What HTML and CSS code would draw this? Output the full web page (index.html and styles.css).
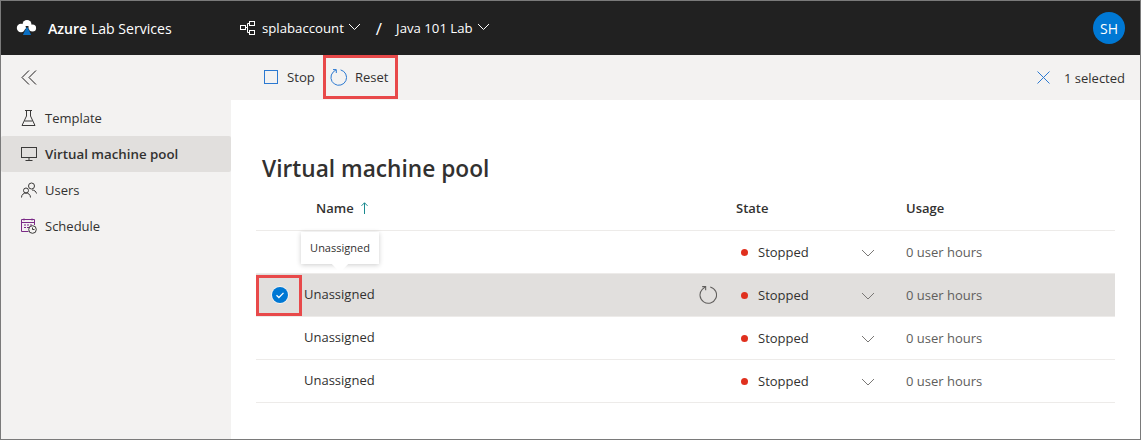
FILE: index.html
```html
<!doctype html>
<html>
    <head>
        <title>Azure Lab Services</title>
        <link rel="stylesheet" href="styles.css">
    </head>
    <body>
        <div class="frame">
            <header class="topbar">
                <svg class="logo" width="21" height="18" viewBox="0 0 21 18">
                    <circle cx="5" cy="9" r="4.2" fill="#fff" />
                    <circle cx="11" cy="5.5" r="4.5" fill="#fff" />
                    <circle cx="16.5" cy="9" r="3.6" fill="#fff" />
                    <path d="M9.5 7h3v3l-2 1z" fill="#212121" />
                    <path d="M10.5 8.5l-3.6 7.5h8.2l-3.4-7.5z" fill="#0a6fc2" />
                </svg>
                <div class="brand"><strong>Azure</strong> Lab Services</div>
                <svg class="net_icon" width="16" height="14" viewBox="0 0 16 14" fill="none" stroke="#fff">
                    <rect x="0.5" y="4.5" width="5" height="4" />
                    <rect x="9.5" y="0.5" width="5" height="4" />
                    <rect x="9.5" y="9.5" width="5" height="4" />
                    <path d="M5.5 6.5h2v-4h2M7.5 6.5v5h2" />
                </svg>
                <span class="crumb">splabaccount</span>
                <svg class="caret" width="13" height="8" viewBox="0 0 13 8" fill="none" stroke="#fff"><path d="M1 1l5.5 5.5L12 1" /></svg>
                <span class="slash">/</span>
                <span class="crumb">Java 101 Lab</span>
                <svg class="caret" width="13" height="8" viewBox="0 0 13 8" fill="none" stroke="#fff"><path d="M1 1l5.5 5.5L12 1" /></svg>
                <div class="avatar">SH</div>
            </header>
            <div class="toolbar">
                <div class="collapse">
                    <svg width="16" height="15" viewBox="0 0 16 15" fill="none" stroke="#201f1e"><path d="M8 .5L1 7.500l7 7M15 .5L8 7.500l7 7" /></svg>
                </div>
                <button class="tool tool_stop">
                    <svg width="14" height="14" viewBox="0 0 14 14" fill="none" stroke="#2b79d1"><rect x="0.5" y="0.5" width="13" height="13" /></svg>
                    Stop
                </button>
                <button class="tool tool_reset">
                    <svg width="17" height="17" viewBox="0 0 17 17" fill="none" stroke="#2b79d1"><path d="M10.600 .9A7.800 7.800 0 1 1 3.100 3.100L6 .8" /><path d="M3 .6H6.300V4" /></svg>
                    Reset
                </button>
                <div class="selected">
                    <svg width="13" height="13" viewBox="0 0 13 13" fill="none" stroke="#2b79d1"><path d="M.5 .5l12 12M12.500 .5l-12 12" /></svg>
                    <span class="selected_count">1 selected</span>
                </div>
            </div>
            <div class="body">
                <nav class="sidebar">
                    <a class="nav_item">
                        <svg width="15" height="16" viewBox="0 0 15 16" fill="none" stroke="#3b3a39"><path d="M4 .5h7M5.500 .5v5.500L1 15.500h13L9.500 6V.5M3.500 11h8" /></svg>
                        Template
                    </a>
                    <a class="nav_item nav_active">
                        <svg width="16" height="14" viewBox="0 0 16 14" fill="none" stroke="#3b3a39"><rect x="0.500" y="0.500" width="15" height="10" /><path d="M8 10.500v2.500M4.500 13.500h7" /></svg>
                        Virtual machine pool
                    </a>
                    <a class="nav_item">
                        <svg width="16" height="16" viewBox="0 0 16 16" fill="none" stroke="#3b3a39"><circle cx="10.500" cy="4" r="3" /><circle cx="5" cy="8.500" r="2.500" /><path d="M.5 15.500c0-6 9-6 9 0M11 8c2.500 0 4 1.500 4.500 3.500" /></svg>
                        Users
                    </a>
                    <a class="nav_item">
                        <svg width="16" height="16" viewBox="0 0 16 16" fill="none" stroke="#7a2a86"><path d="M7.500 13.500H.5V1.500h13v5.500M.5 4.500h13M3 .5v2M11 .5v2M3 7h2M6 7h2M9 7h2M3 9.500h2M6 9.500h2" /><circle cx="11.500" cy="11.500" r="3.800" stroke="#3b3a39" /><path d="M11.500 9.500v2h2" stroke="#3b3a39" /></svg>
                        Schedule
                    </a>
                </nav>
                <main class="content">
                    <h1 class="title">Virtual machine pool</h1>
                    <div class="table">
                        <div class="row row_head">
                            <div class="cell_check"></div>
                            <div class="cell_name head_name">Name
                                <svg width="7" height="12" viewBox="0 0 7 12" fill="none" stroke="#1a8a8f"><path d="M3.500 12V.8M.5 3.800l3-3 3 3" /></svg>
                            </div>
                            <div class="cell_state">State</div>
                            <div class="cell_usage">Usage</div>
                        </div>
                        <div class="row">
                            <div class="cell_check"></div>
                            <div class="cell_name"></div>
                            <div class="cell_state"><i class="dot"></i>Stopped
                                <svg class="row_caret" width="14" height="8" viewBox="0 0 14 8" fill="none" stroke="#797775"><path d="M1 1l6 6 6-6" /></svg>
                            </div>
                            <div class="cell_usage">0 user hours</div>
                        </div>
                        <div class="row row_selected">
                            <div class="cell_check">
                                <svg width="18" height="18" viewBox="0 0 18 18"><circle cx="9" cy="9" r="9" fill="#f3f2f1" /><circle cx="9" cy="9" r="8" fill="#0078d4" /><path d="M5.500 9.300l2.400 2.200 4.600-4.600" fill="none" stroke="#fff" stroke-width="1.300" /></svg>
                            </div>
                            <div class="cell_name">Unassigned
                                <svg class="row_reset" width="18" height="18" viewBox="0 0 17 17" fill="none" stroke="#605e5c"><path d="M10.600 .9A7.800 7.800 0 1 1 3.100 3.100L6 .8" /><path d="M3 .6H6.300V4" /></svg>
                            </div>
                            <div class="cell_state"><i class="dot"></i>Stopped
                                <svg class="row_caret" width="14" height="8" viewBox="0 0 14 8" fill="none" stroke="#797775"><path d="M1 1l6 6 6-6" /></svg>
                            </div>
                            <div class="cell_usage">0 user hours</div>
                        </div>
                        <div class="row">
                            <div class="cell_check"></div>
                            <div class="cell_name">Unassigned</div>
                            <div class="cell_state"><i class="dot"></i>Stopped
                                <svg class="row_caret" width="14" height="8" viewBox="0 0 14 8" fill="none" stroke="#797775"><path d="M1 1l6 6 6-6" /></svg>
                            </div>
                            <div class="cell_usage">0 user hours</div>
                        </div>
                        <div class="row">
                            <div class="cell_check"></div>
                            <div class="cell_name">Unassigned</div>
                            <div class="cell_state"><i class="dot"></i>Stopped
                                <svg class="row_caret" width="14" height="8" viewBox="0 0 14 8" fill="none" stroke="#797775"><path d="M1 1l6 6 6-6" /></svg>
                            </div>
                            <div class="cell_usage">0 user hours</div>
                        </div>
                        <div class="tooltip">Unassigned</div>
                        <div class="mark mark_check"></div>
                    </div>
                </main>
            </div>
            <div class="mark mark_reset"></div>
        </div>
    </body>
</html>
```

FILE: styles.css
```css
* {
    box-sizing: border-box;
}

html,
body {
    margin: 0;
    height: 440px;
    overflow: hidden;
}

body {
    font-family: "Open Sans", "Noto Sans", sans-serif;
    font-size: 13px;
    color: #323130;
}

.frame {
    position: relative;
    height: 440px;
    border: 1px solid #7a7a7a;
    display: flex;
    flex-direction: column;
    background-color: #fff;
}

.topbar {
    height: 54px;
    flex-shrink: 0;
    background-color: #212121;
    color: #fff;
    display: flex;
    align-items: center;
    padding-left: 15px;
}

.brand {
    font-size: 14.1px;
    margin-left: 11px;
    width: 192px;
}

.brand strong {
    font-weight: 600;
}

.net_icon {
    margin-right: 6px;
}

.crumb {
    font-size: 13.2px;
}

.caret {
    margin-left: 4px;
    margin-top: -2px;
}

.slash {
    font-size: 17px;
    margin: 0 14px 0 15px;
}

.avatar {
    width: 32px;
    height: 32px;
    margin-left: auto;
    margin-right: 15px;
    border-radius: 50%;
    background-color: #0078d4;
    display: flex;
    align-items: center;
    justify-content: center;
    font-size: 14px;
}

.toolbar {
    height: 45px;
    flex-shrink: 0;
    background-color: #f3f2f1;
    display: flex;
    align-items: center;
}

.collapse {
    width: 263px;
    padding-left: 20px;
    display: flex;
}

.tool {
    border: 0;
    padding: 0;
    margin-bottom: 1px;
    background: none;
    font: inherit;
    color: #323130;
    display: flex;
    align-items: center;
}

.tool_stop {
    gap: 9px;
    font-size: 13.2px;
}

.tool_reset {
    gap: 8px;
    margin-left: 15px;
}

.selected {
    margin-left: auto;
    margin-right: 14px;
    display: flex;
    align-items: center;
    gap: 14px;
}

.selected_count {
    width: 62px;
    white-space: nowrap;
}

.body {
    flex-grow: 1;
    display: flex;
}

.sidebar {
    width: 230px;
    background-color: #f3f2f1;
}

.nav_item {
    height: 36px;
    padding-left: 20px;
    display: flex;
    align-items: center;
    gap: 8px;
}

.nav_item:first-child {
    gap: 9px;
}

.nav_active {
    background-color: #e1dfdd;
    font-weight: 600;
    font-size: 13.3px;
    border-radius: 2px;
}

.content {
    flex-grow: 1;
    padding: 54px 25px 0;
}

.title {
    margin: 0 0 0 6px;
    font-size: 22.7px;
    font-weight: 600;
    line-height: 30px;
}

.table {
    position: relative;
    margin-top: 6px;
}

.row {
    height: 43px;
    display: flex;
    align-items: center;
    border-bottom: 1px solid #edebe9;
}

.row_head {
    height: 41px;
    font-weight: 600;
    padding-bottom: 5px;
}

.row_selected {
    background-color: #e1dfdd;
}

.cell_check {
    width: 48px;
    padding-left: 15px;
    display: flex;
}

.cell_name {
    width: 432px;
    position: relative;
    display: flex;
    align-items: center;
    justify-content: space-between;
    padding-right: 19px;
    padding-bottom: 2px;
}

.row_reset {
    margin-top: 2px;
}

.head_name {
    justify-content: flex-start;
    gap: 7px;
    padding-left: 12px;
    padding-bottom: 0;
}

.cell_state {
    width: 170px;
    position: relative;
    display: flex;
    align-items: center;
}

.row_caret {
    position: absolute;
    left: 125px;
    top: 6px;
}

.dot {
    width: 7px;
    height: 7px;
    border-radius: 50%;
    background-color: #e0301e;
    margin: 0 10px 0 5px;
}

.cell_usage {
    color: #605e5c;
}

.row_head .cell_usage {
    color: inherit;
}

.tooltip {
    position: absolute;
    left: 45px;
    top: 42px;
    width: 78px;
    height: 32px;
    padding-bottom: 2px;
    background-color: #fff;
    box-shadow: 0 1px 5px rgba(0, 0, 0, 0.2);
    font-size: 11px;
    display: flex;
    align-items: center;
    justify-content: center;
}

.tooltip::after {
    content: "";
    position: absolute;
    left: 33px;
    bottom: -6px;
    width: 12px;
    height: 12px;
    background-color: #fff;
    transform: rotate(45deg);
    clip-path: polygon(100% 0, 100% 100%, 0 100%);
}

.mark {
    position: absolute;
    border: 3px solid #e8494a;
    pointer-events: none;
}

.mark_check {
    left: 0;
    top: 85px;
    width: 46px;
    height: 41px;
}

.mark_reset {
    left: 322px;
    top: 54px;
    width: 75px;
    height: 44px;
}
```
